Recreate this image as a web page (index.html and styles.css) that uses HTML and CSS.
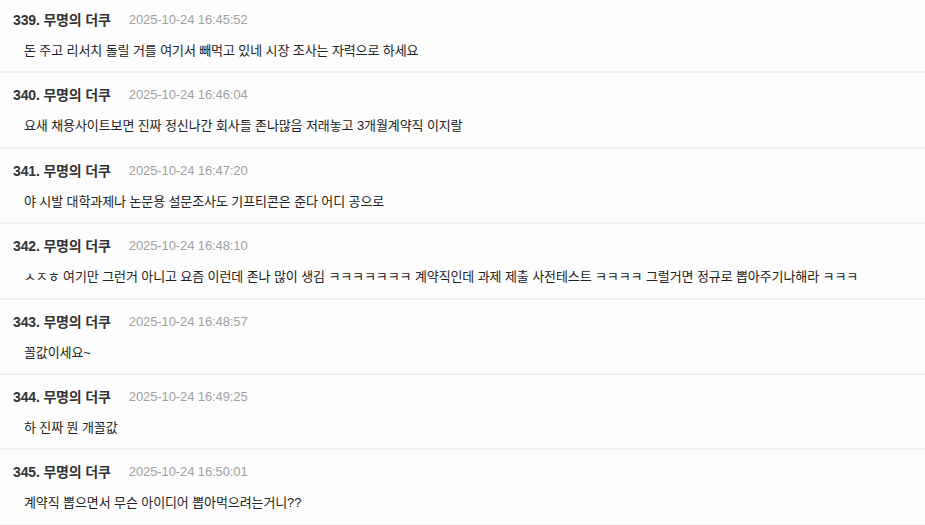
FILE: index.html
```html
<!DOCTYPE html>
<html lang="ko">
<head>
<meta charset="utf-8">
<title>댓글</title>
<link rel="stylesheet" href="styles.css">
</head>
<body>
<div class="list">
  <div class="row">
    <div class="head"><span class="name">339. 무명의 더쿠</span><span class="date">2025-10-24 16:45:52</span></div>
    <div class="text">돈 주고 리서치 돌릴 거를 여기서 빼먹고 있네 시장 조사는 자력으로 하세요</div>
  </div>
  <div class="row">
    <div class="head"><span class="name">340. 무명의 더쿠</span><span class="date">2025-10-24 16:46:04</span></div>
    <div class="text">요새 채용사이트보면 진짜 정신나간 회사들 존나많음 저래놓고 3개월계약직 이지랄</div>
  </div>
  <div class="row">
    <div class="head"><span class="name">341. 무명의 더쿠</span><span class="date">2025-10-24 16:47:20</span></div>
    <div class="text">야 시발 대학과제나 논문용 설문조사도 기프티콘은 준다 어디 공으로</div>
  </div>
  <div class="row">
    <div class="head"><span class="name">342. 무명의 더쿠</span><span class="date">2025-10-24 16:48:10</span></div>
    <div class="text">ㅅㅈㅎ 여기만 그런거 아니고 요즘 이런데 존나 많이 생김 ㅋㅋㅋㅋㅋㅋㅋ 계약직인데 과제 제출 사전테스트 ㅋㅋㅋㅋ 그럴거면 정규로 뽑아주기나해라 ㅋㅋㅋ</div>
  </div>
  <div class="row">
    <div class="head"><span class="name">343. 무명의 더쿠</span><span class="date">2025-10-24 16:48:57</span></div>
    <div class="text">꼴값이세요~</div>
  </div>
  <div class="row">
    <div class="head"><span class="name">344. 무명의 더쿠</span><span class="date">2025-10-24 16:49:25</span></div>
    <div class="text">하 진짜 뭔 개꼴값</div>
  </div>
  <div class="row">
    <div class="head"><span class="name">345. 무명의 더쿠</span><span class="date">2025-10-24 16:50:01</span></div>
    <div class="text">계약직 뽑으면서 무슨 아이디어 뽑아먹으려는거니??</div>
  </div>
</div>
</body>
</html>
```

FILE: styles.css
```css
html, body {
  margin: 0;
  padding: 0;
  background: #fdfdfd;
}
body {
  font-family: "Liberation Sans", "Noto Sans CJK KR", sans-serif;
  overflow: hidden;
}
.list {
  display: flex;
  flex-direction: column;
  margin-top: -2px;
}
.row {
  display: flex;
  flex-direction: column;
  gap: 11px;
  padding: 12px 13px 10.4px 13px;
  border-bottom: 2px solid #f0f0f0;
}
.head {
  display: flex;
  align-items: center;
  gap: 18px;
  height: 20px;
}
.name {
  font-size: 14px;
  font-weight: 700;
  color: #333;
  letter-spacing: -0.15px;
  line-height: 20px;
}
.date {
  font-size: 13px;
  color: #a0a0a0;
  letter-spacing: -0.1px;
  line-height: 20px;
}
.text {
  padding-left: 11px;
  font-size: 13px;
  color: #222;
  letter-spacing: -0.1px;
  line-height: 20px;
  white-space: nowrap;
}
```
